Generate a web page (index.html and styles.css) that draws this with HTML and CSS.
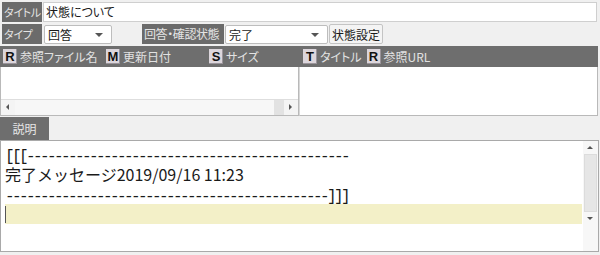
FILE: index.html
```html
<!DOCTYPE html>
<html lang="ja">
<head>
  <meta charset="UTF-8" />
  <title>状態について</title>
  <link rel="stylesheet" href="styles.css">
</head>
<body>

<div class="row row-title">
  <span class="lbl lbl-short">タイトル</span>
  <div class="field">状態について</div>
</div>

<div class="row row-type">
  <span class="lbl lbl-short">タイプ</span>
  <div class="select sel-type">回答<span class="caret"></span></div>
  <span class="lbl lbl-status">回答・確認状態</span>
  <div class="select sel-status">完了<span class="caret"></span></div>
  <button class="btn">状態設定</button>
</div>

<div class="lists">
  <div class="pane pane-files">
    <div class="head">
      <span class="col col-name"><b class="key">R</b>参照ファイル名</span>
      <span class="col col-date"><b class="key">M</b>更新日付</span>
      <span class="col col-size"><b class="key">S</b>サイズ</span>
    </div>
    <div class="body"></div>
    <div class="hscroll">
      <span class="arr arr-left"></span>
      <span class="track"></span>
      <span class="thumb"></span>
      <span class="arr arr-right"></span>
    </div>
  </div>
  <div class="pane pane-urls">
    <div class="head">
      <span class="col col-title"><b class="key">T</b>タイトル</span>
      <span class="col"><b class="key">R</b>参照URL</span>
    </div>
    <div class="body"></div>
  </div>
</div>

<div class="tabs">
  <span class="tab">説明</span>
</div>

<div class="memo">
  <div class="text">
    <div class="line"><span class="mono">[[[----------------------------------------------</span></div>
    <div class="line">完了メッセージ2019/09/16 11:23</div>
    <div class="line"><span class="mono">----------------------------------------------]]]</span></div>
    <div class="line current"><span class="cursor"></span></div>
  </div>
  <div class="vscroll">
    <span class="varr varr-up"></span>
    <span class="vthumb"></span>
    <span class="varr varr-down"></span>
  </div>
</div>

</body>
</html>
```

FILE: styles.css
```css
body {
  margin: 0;
  background: #f0f0f0;
  font-family: "Noto Sans CJK JP", "Noto Sans", sans-serif;
  font-size: 12px;
  font-feature-settings: "palt";
  color: #1a1a1a;
  width: 600px;
  height: 255px;
  overflow: hidden;
}
.row {
  display: flex;
  align-items: center;
  height: 20px;
  padding-left: 2px;
}
.row-title { margin-top: 2px; }
.row-type { margin-top: 2px; }
.lbl {
  flex-shrink: 0;
  background: #6b6b6b;
  color: #e4e4e4;
  height: 20px;
  line-height: 20px;
  padding-left: 2px;
  box-sizing: border-box;
  white-space: nowrap;
  overflow: hidden;
}
.lbl-short { width: 40px; font-size: 11px; letter-spacing: -0.3px; }
.lbl-status { width: 82px; margin-left: 30px; letter-spacing: -0.4px; }
.field {
  flex: 0 0 554px;
  margin-left: 1px;
  height: 20px;
  line-height: 18px;
  background: #fff;
  border: 1px solid #cfcfcf;
  box-sizing: border-box;
  padding-left: 2px;
}
.select {
  flex-shrink: 0;
  position: relative;
  height: 19px;
  line-height: 17px;
  background: #fff;
  border: 1px solid #bdbdbd;
  border-radius: 2px;
  box-sizing: border-box;
  padding-left: 3px;
}
.sel-type { width: 68px; margin-left: 2px; }
.sel-status { width: 103px; margin-left: 1px; }
.caret {
  position: absolute;
  right: 8px;
  top: 7px;
  border-left: 4px solid transparent;
  border-right: 4px solid transparent;
  border-top: 4px solid #555;
}
.btn {
  flex-shrink: 0;
  font: inherit;
  font-feature-settings: "palt";
  margin-left: 1px;
  width: 54px;
  height: 20px;
  padding: 0;
  background: #f4f4f4;
  border: 1px solid #c4c4c4;
  border-radius: 2px;
  color: #1a1a1a;
}
.lists {
  display: flex;
  margin-top: 2px;
  height: 70px;
}
.pane {
  display: flex;
  flex-direction: column;
  box-sizing: border-box;
  border: 1px solid #b9b9b9;
  border-top: none;
  background: #fff;
}
.pane-files { width: 299px; }
.pane-urls { width: 299px; border-left-color: #d8d8d8; }
.head {
  display: flex;
  height: 21px;
  align-items: center;
  background: #6e6e6e;
  color: #e2e2e2;
  white-space: nowrap;
  margin: 0 -1px;
}
.col { display: flex; align-items: center; }
.col-name { width: 103px; padding-left: 3px; }
.col-date { width: 103px; }
.col-size { flex: 1; }
.col-title { padding-left: 4px; margin-right: 5px; }
.key {
  display: inline-block;
  width: 14px;
  height: 15px;
  line-height: 15px;
  text-align: center;
  background: #dcd6dc;
  color: #111;
  font-family: "Liberation Sans", sans-serif;
  font-size: 13px;
  font-weight: bold;
  margin-right: 3px;
  box-shadow: inset -1px -1px 0 #9a949a;
}
.body { flex: 1; }
.hscroll {
  position: relative;
  height: 15px;
  border-top: 1px solid #dedede;
  background: #f4f4f4;
  display: flex;
}
.track { flex: 1; background: #f7f7f7; }
.thumb { width: 10px; background: #e2e2e2; }
.arr { width: 14px; position: relative; }
.arr::after {
  content: "";
  position: absolute;
  top: 4px;
  left: 5px;
  border-top: 3px solid transparent;
  border-bottom: 3px solid transparent;
}
.arr-left::after { border-right: 3px solid #555; }
.arr-right::after { border-left: 3px solid #555; }
.tabs {
  height: 23px;
  margin-top: 1px;
  display: flex;
}
.tab {
  width: 49px;
  background: #6e6e6e;
  color: #e6e6e6;
  line-height: 23px;
  text-align: center;
}
.memo {
  display: flex;
  height: 112px;
  width: 599px;
  box-sizing: border-box;
  border: 1px solid #a9a9a9;
  background: #fff;
}
.text {
  flex: 1;
  padding-top: 3px;
  padding-left: 4px;
  padding-right: 1px;
  font-size: 16px;
  font-feature-settings: normal;
  color: #1a1a1a;
}
.line {
  height: 20px;
  line-height: 20px;
  white-space: nowrap;
}
.mono {
  font-family: "Liberation Mono", monospace;
  letter-spacing: -2.6px;
}
.current { background: #f3f0c8; }
.cursor {
  display: inline-block;
  width: 1px;
  height: 17px;
  margin-top: 2px;
  vertical-align: top;
  background: #555;
}
.vscroll {
  width: 15px;
  display: flex;
  flex-direction: column;
  background: #f7f7f7;
}
.varr { height: 13px; position: relative; }
.varr::after {
  content: "";
  position: absolute;
  left: 4px;
  top: 5px;
  border-left: 3px solid transparent;
  border-right: 3px solid transparent;
}
.varr-up::after { border-bottom: 3px solid #555; }
.varr-down::after { border-top: 3px solid #555; }
.vthumb {
  height: 56px;
  background: #e6e6e6;
  border: 1px solid #dcdcdc;
  margin: 0 1px;
}
```
